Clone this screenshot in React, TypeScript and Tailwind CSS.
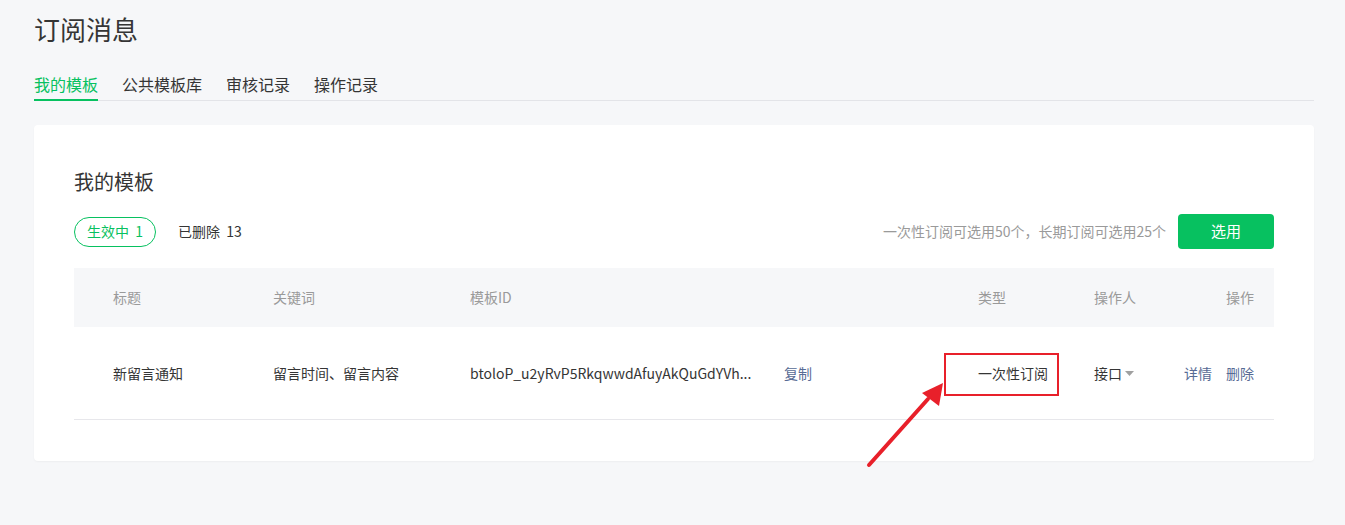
import React from 'react';

const tabs = ['我的模板', '公共模板库', '审核记录', '操作记录'];

export default function App() {
  return (
    <div
      className="relative min-h-[525px] bg-[#f6f7f9] pl-[34px] pr-[31px] pt-[11px] text-[#353535]"
      style={{ fontFamily: '"Noto Sans CJK SC", "Noto Sans", sans-serif' }}
    >
      {/* Page title */}
      <h1 className="text-[26px] leading-[36px] font-normal">订阅消息</h1>

      {/* Tabs */}
      <div className="mt-[25px] flex gap-[24px] border-b border-[#e3e4e8]">
        {tabs.map((t, i) => (
          <div
            key={t}
            className={`-mb-px pb-[3px] text-[16px] leading-6 border-b-2 ${
              i === 0 ? 'border-[#07c160] text-[#07c160]' : 'border-transparent text-[#353535]'
            }`}
          >
            {t}
          </div>
        ))}
      </div>

      {/* Card */}
      <div className="mt-[24px] rounded-[4px] bg-white px-[40px] pt-[43px] pb-[41px] shadow-[0_1px_2px_rgba(0,0,0,0.04)]">
        <h2 className="text-[20px] leading-[28px] font-normal">我的模板</h2>

        <div className="mt-[18px] flex items-center justify-between">
          <div className="flex items-center gap-[22px] text-[14px]">
            <span className="flex h-[30px] items-center rounded-full border border-[#07c160] px-[12px] text-[#07c160]">
              生效中&nbsp;&nbsp;1
            </span>
            <span>已删除&nbsp;&nbsp;13</span>
          </div>
          <div className="flex items-center gap-[12px]">
            <span className="text-[14px] text-[#9a9a9a]">一次性订阅可选用50个，长期订阅可选用25个</span>
            <button className="h-[35px] w-[96px] rounded-[4px] bg-[#07c160] text-[15px] text-white">选用</button>
          </div>
        </div>

        {/* Table */}
        <div className="mt-[19px] text-[14px]">
          <div className="grid h-[59px] grid-cols-[160px_197px_508px_116px_1fr_auto] items-center bg-[#f6f7f9] pl-[39px] pr-[20px] text-[#9a9a9a]">
            <span>标题</span>
            <span>关键词</span>
            <span>模板ID</span>
            <span>类型</span>
            <span>操作人</span>
            <span>操作</span>
          </div>
          <div className="grid h-[93px] grid-cols-[160px_197px_508px_116px_1fr_auto] items-center border-b border-[#e7e7eb] pl-[39px] pr-[20px] text-[#353535]">
            <span>新留言通知</span>
            <span>留言时间、留言内容</span>
            <span className="flex items-center gap-[22px]">
              <span className="w-[292px] whitespace-nowrap">btoloP_u2yRvP5RkqwwdAfuyAkQuGdYVh...</span>
              <span className="text-[#576b95]">复制</span>
            </span>
            <span>一次性订阅</span>
            <span className="flex items-center gap-[3px]">
              接口
              <svg width="9" height="5" viewBox="0 0 9 5">
                <path d="M0 0 L9 0 L4.5 5 Z" fill="#a0a0a0" />
              </svg>
            </span>
            <span className="flex gap-[14px] text-[#576b95]">
              <span>详情</span>
              <span>删除</span>
            </span>
          </div>
        </div>
      </div>

      {/* Annotation overlay */}
      <svg
        className="pointer-events-none absolute left-0 top-0"
        width="1345"
        height="525"
        viewBox="0 0 1345 525"
      >
        <rect x="945" y="354" width="113" height="41" fill="none" stroke="#e8202a" strokeWidth="2" />
        <line x1="869" y1="465" x2="928" y2="399" stroke="#e8202a" strokeWidth="4" strokeLinecap="round" />
        <path d="M943 383 L922 393 L939 406 Z" fill="#e8202a" />
      </svg>
    </div>
  );
}
